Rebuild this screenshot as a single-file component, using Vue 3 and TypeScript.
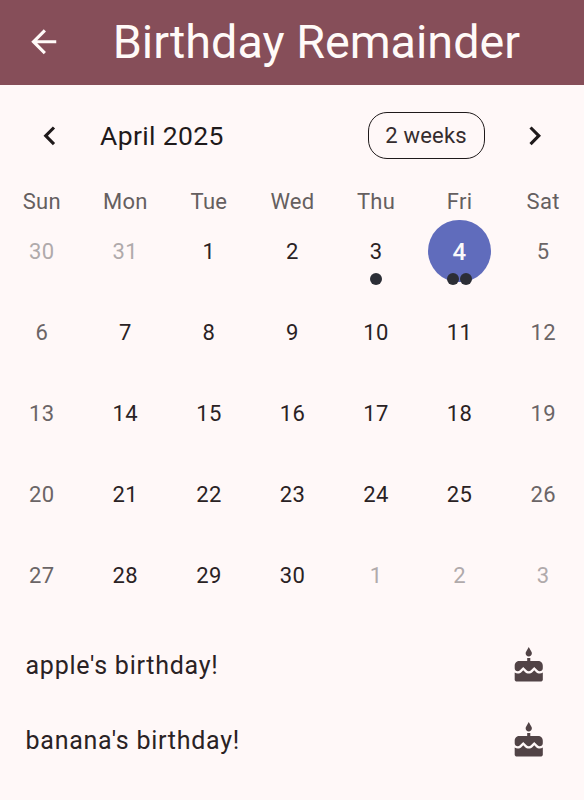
<script setup lang="ts">
import { ref } from 'vue'

interface Day {
  n: number
  outside: boolean
  weekend: boolean
  selected: boolean
  events: number
}

const weekdays: string[] = ['Sun', 'Mon', 'Tue', 'Wed', 'Thu', 'Fri', 'Sat']
const selected = ref<number>(4)
const eventCounts: Record<number, number> = { 3: 1, 4: 2 }

function buildDay(index: number): Day {
  const date = new Date(2025, 2, 30 + index)
  const n = date.getDate()
  const outside = date.getMonth() !== 3
  return {
    n,
    outside,
    weekend: index % 7 === 0 || index % 7 === 6,
    selected: !outside && n === selected.value,
    events: outside ? 0 : eventCounts[n] ?? 0,
  }
}

const days: Day[] = Array.from({ length: 35 }, (_, i) => buildDay(i))
const birthdays: string[] = ["apple's birthday!", "banana's birthday!"]
</script>

<template>
  <div class="screen">
    <header class="appbar">
      <svg class="icon" viewBox="0 0 24 24"><path d="M20 11H7.83l5.59-5.59L12 4l-8 8 8 8 1.41-1.41L7.83 13H20v-2z" /></svg>
      <h1 class="title">Birthday Remainder</h1>
    </header>

    <div class="toolbar">
      <svg class="icon" viewBox="0 0 24 24"><path d="M15.41 7.41L14 6l-6 6 6 6 1.41-1.41L10.83 12z" /></svg>
      <span class="month">April 2025</span>
      <button class="format">2 weeks</button>
      <svg class="icon" viewBox="0 0 24 24"><path d="M10 6L8.59 7.41 13.17 12l-4.58 4.59L10 18l6-6z" /></svg>
    </div>

    <div class="grid weekdays">
      <span v-for="w in weekdays" :key="w">{{ w }}</span>
    </div>

    <div class="grid days">
      <div
        v-for="(d, i) in days"
        :key="i"
        class="day"
        :class="{ weekend: d.weekend, outside: d.outside, selected: d.selected }"
      >
        <span class="num">{{ d.n }}</span>
        <span v-if="d.events" class="dots"><i v-for="e in d.events" :key="e" class="dot"></i></span>
      </div>
    </div>

    <ul class="list">
      <li v-for="b in birthdays" :key="b" class="item">
        <span>{{ b }}</span>
        <svg class="icon" viewBox="0 0 24 24"><path d="M12 6c1.11 0 2-.9 2-2 0-.38-.1-.73-.29-1.03L12 0l-1.71 2.97c-.19.3-.29.65-.29 1.03 0 1.1.9 2 2 2zm4.6 9.99l-1.07-1.07-1.08 1.07c-1.3 1.3-3.58 1.31-4.89 0l-1.07-1.07-1.09 1.07C6.75 16.64 5.88 17 4.96 17c-.73 0-1.4-.23-1.96-.61V21c0 .55.45 1 1 1h16c.55 0 1-.45 1-1v-4.61c-.56.38-1.23.61-1.96.61-.92 0-1.79-.36-2.44-1.01zM18 9h-5V7h-2v2H6c-1.66 0-3 1.34-3 3v1.54c0 1.08.88 1.96 1.96 1.96.52 0 1.02-.2 1.38-.57l2.14-2.13 2.13 2.13c.74.74 2.03.74 2.77 0l2.14-2.13 2.13 2.13c.37.37.86.57 1.38.57 1.08 0 1.96-.88 1.96-1.96V12C21 10.34 19.66 9 18 9z" /></svg>
      </li>
    </ul>
  </div>
</template>

<style>
body {
  background: #fff8f8;
}
</style>

<style scoped>
.screen {
  width: 584px;
  height: 800px;
  overflow: hidden;
  background: #fff8f8;
  color: #2a2224;
  font-family: Roboto, sans-serif;
}
.icon {
  width: 37.5px;
  height: 37.5px;
  flex: none;
  fill: currentColor;
}
.appbar {
  height: 85.3px;
  box-sizing: border-box;
  padding: 0 25px 1px;
  display: flex;
  align-items: center;
  gap: 50.2px;
  background: #864e59;
  color: #fffaf8;
}
.title {
  margin: 0;
  font-size: 46.7px;
  font-weight: 400;
  line-height: 61px;
  white-space: nowrap;
}
.toolbar {
  height: 100px;
  box-sizing: border-box;
  padding: 0 30.5px 0 31.3px;
  display: flex;
  align-items: center;
  color: #1f1a1b;
}
.month {
  flex: 1;
  margin-left: 31.3px;
  font-size: 26.5px;
  letter-spacing: 0.35px;
}
.format {
  width: 117px;
  height: 47px;
  margin-right: 31.5px;
  padding: 0;
  border: 1.6px solid #1f1a1b;
  border-radius: 19px;
  background: transparent;
  color: #352c2e;
  font-family: inherit;
  font-size: 22px;
  letter-spacing: 0.2px;
}
.grid {
  display: grid;
  grid-template-columns: repeat(7, 83.57px);
}
.weekdays {
  height: 25px;
  margin-top: 4px;
  line-height: 25px;
  margin-bottom: -4px;
  text-align: center;
  font-size: 22px;
  letter-spacing: 0.3px;
  color: #655f60;
}
.days {
  padding-top: 0.2px;
  grid-auto-rows: 81px;
  font-size: 22px;
  letter-spacing: 0.4px;
}
.day {
  position: relative;
  display: flex;
  align-items: center;
  justify-content: center;
  color: #2a2224;
}
.weekend {
  color: #6b6566;
}
.outside {
  color: #b0aaab;
}
.num {
  width: 62.5px;
  height: 62.5px;
  border-radius: 50%;
  line-height: 64.5px;
  text-align: center;
}
.selected .num {
  background: #606cbc;
  color: #fafafa;
  font-size: 24px;
  font-weight: 500;
}
.dots {
  position: absolute;
  left: 0;
  right: 0;
  bottom: 6px;
  display: flex;
  justify-content: center;
  gap: 0.8px;
}
.dot {
  width: 12.5px;
  height: 12.5px;
  border-radius: 50%;
  background: #2c2e36;
}
.list {
  margin: 12.3px 0 0;
  padding: 0;
  list-style: none;
}
.item {
  height: 75px;
  padding: 0 36.5px 0 25.5px;
  display: flex;
  align-items: center;
  justify-content: space-between;
  font-size: 25px;
  letter-spacing: 0.75px;
}
.item .icon {
  color: #514346;
}
</style>
